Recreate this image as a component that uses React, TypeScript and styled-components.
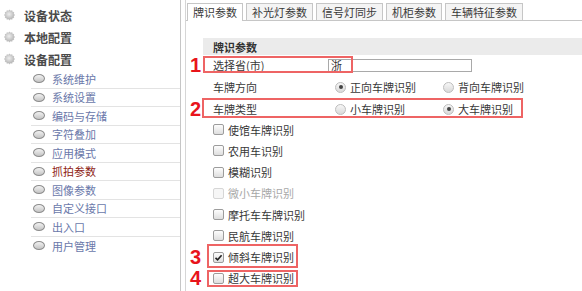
import React from 'react';
import styled, { createGlobalStyle } from 'styled-components';

const GlobalStyle = createGlobalStyle`
  html, body {
    margin: 0;
    padding: 0;
    background: #fff;
  }
  body {
    font-family: "Noto Sans CJK SC", "Liberation Sans", sans-serif;
  }
`

const topItems = ['设备状态', '本地配置', '设备配置'];
const subItems = ['系统维护', '系统设置', '编码与存储', '字符叠加', '应用模式', '抓拍参数', '图像参数', '自定义接口', '出入口', '用户管理'];
const tabs = ['牌识参数', '补光灯参数', '信号灯同步', '机柜参数', '车辆特征参数'];

type Check = { text: string; checked?: boolean; disabled?: boolean; mark?: string; box?: { top: number; height: number } };

const checks: Check[] = [
  { text: '使馆车牌识别' },
  { text: '农用车识别' },
  { text: '模糊识别' },
  { text: '微小车牌识别', disabled: true },
  { text: '摩托车车牌识别' },
  { text: '民航车牌识别' },
  { text: '倾斜车牌识别', checked: true, mark: '3', box: { top: -2.5, height: 24 } },
  { text: '超大车牌识别', mark: '4', box: { top: 2, height: 17 } },
];

function Gear() {
  return (
    <svg width="13" height="12" viewBox="0 0 13 12">
      <defs>
        <radialGradient id="gearFill" cx="0.45" cy="0.4" r="0.6">
          <stop offset="0" stopColor="#eeeeee" />
          <stop offset="1" stopColor="#b8b8b8" />
        </radialGradient>
      </defs>
      {[0, 30, 60, 90, 120, 150].map((a) => (
        <rect key={a} x="5.6" y="0.8" width="1.8" height="10.4" rx="0.7" fill="#c2c2c2" transform={`rotate(${a} 6.5 6)`} />
      ))}
      <ellipse cx="6.5" cy="6" rx="4.6" ry="4.2" fill="url(#gearFill)" />
    </svg>
  );
}

function App() {
  return (
    <Page>
      <GlobalStyle />
      <Sidebar>
        {topItems.map((t) => (
          <TopItem key={t}>
            <Gear />
            {t}
          </TopItem>
        ))}
        <SubList>
          {subItems.map((s) => (
            <SubItem key={s} $active={s === '抓拍参数'}>
              <Bullet />
              {s}
            </SubItem>
          ))}
        </SubList>
      </Sidebar>

      <Main>
        <TabBar>
          {tabs.map((t, i) => (
            <Tab key={t} $active={i === 0}>{t}</Tab>
          ))}
        </TabBar>

        <Body>
          <SectionHeader>牌识参数</SectionHeader>

          <Row $h={20}>
            <Marker>1</Marker>
            <Field>
              <Label>选择省(市)</Label>
              <TextInput value="浙" readOnly />
            </Field>
            <Annotation $left={17} $top={1} $w={150} $h={17} />
          </Row>

          <Row $h={24}>
            <Marker />
            <Field>
              <Label>车牌方向</Label>
              <Options>
                <Option><Radio $checked />正向车牌识别</Option>
                <Option><Radio />背向车牌识别</Option>
              </Options>
            </Field>
          </Row>

          <Row $h={20}>
            <Marker>2</Marker>
            <Field>
              <Label>车牌类型</Label>
              <Options>
                <Option><Radio />小车牌识别</Option>
                <Option><Radio $checked />大车牌识别</Option>
              </Options>
            </Field>
            <Annotation $left={16} $top={-1} $w={321} $h={20} />
          </Row>

          {checks.map((c) => (
            <Row key={c.text} $h={21.25}>
              <Marker>{c.mark}</Marker>
              <Field $disabled={c.disabled}>
                <CheckBox $disabled={c.disabled}>
                  {c.checked && (
                    <svg width="9" height="9" viewBox="0 0 9 9">
                      <polyline points="1.5,4.8 3.6,6.8 7.6,2.2" fill="none" stroke="#222" strokeWidth="1.6" />
                    </svg>
                  )}
                </CheckBox>
                {c.text}
              </Field>
              {c.box && <Annotation $left={21} $top={c.box.top} $w={91} $h={c.box.height} />}
            </Row>
          ))}
        </Body>
      </Main>
    </Page>
  );
}

const Page = styled.div`
  display: flex;
  width: 582px;
  height: 291px;
  overflow: hidden;
  background: #fff;
`

const Sidebar = styled.div`
  width: 181px;
  flex-shrink: 0;
  box-sizing: border-box;
  padding-top: 4px;
  border-right: 1px solid #c6c6c6;
`

const TopItem = styled.div`
  display: flex;
  align-items: center;
  gap: 8px;
  height: 22px;
  padding-left: 3px;
  font-size: 12px;
  font-weight: bold;
  color: #4a4a4a;
`

const SubList = styled.div`
  margin-left: 31px;
`

const SubItem = styled.div<{ $active?: boolean }>`
  display: flex;
  align-items: center;
  gap: 7px;
  height: 18.5px;
  box-sizing: border-box;
  padding-left: 2px;
  border-bottom: 1px solid #e3e3e3;
  font-size: 11px;
  color: ${(p) => (p.$active ? '#8e1c14' : '#6a78aa')};
  &:last-child {
    border-bottom: none;
  }
`

const Bullet = styled.span`
  width: 12px;
  height: 9px;
  box-sizing: border-box;
  border-radius: 50%;
  border: 1px solid #8c8c8c;
  background: linear-gradient(#f2f2f2, #c4c4c4);
`

const Main = styled.div`
  flex: 1;
  margin-left: 4px;
  border-left: 1px solid #d6d6d6;
`

const TabBar = styled.div`
  display: flex;
  align-items: flex-end;
  gap: 3px;
  height: 21px;
  box-sizing: border-box;
  padding-left: 1px;
  border-bottom: 1px solid #c6c6c6;
`

const Tab = styled.div<{ $active?: boolean }>`
  height: ${(p) => (p.$active ? 18 : 17)}px;
  margin-bottom: ${(p) => (p.$active ? -1 : 0)}px;
  box-sizing: border-box;
  padding: 0 5px;
  border: 1px solid #c6c6c6;
  border-bottom: none;
  background: ${(p) => (p.$active ? '#fff' : '#f4f4f4')};
  font-size: 11px;
  line-height: 16px;
  color: #3a3a3a;
  white-space: nowrap;
`

const Body = styled.div`
  padding-top: 17px;
`

const SectionHeader = styled.div`
  display: flex;
  align-items: center;
  height: 17px;
  margin-left: 17px;
  padding-left: 10px;
  background: #ebebeb;
  font-size: 11px;
  font-weight: bold;
  color: #333;
`

const Row = styled.div<{ $h: number }>`
  position: relative;
  display: flex;
  align-items: center;
  height: ${(p) => p.$h}px;
`

const Marker = styled.span`
  width: 17px;
  flex-shrink: 0;
  box-sizing: border-box;
  padding-left: 4px;
  font-family: "Liberation Sans", Arial, sans-serif;
  font-size: 20px;
  font-weight: bold;
  line-height: 20px;
  color: #e8141b;
`

const Field = styled.div<{ $disabled?: boolean }>`
  display: flex;
  align-items: center;
  padding-left: 10px;
  font-size: 11px;
  color: ${(p) => (p.$disabled ? '#a8a8a8' : '#383838')};
`

const Label = styled.span`
  width: 115px;
`

const TextInput = styled.input`
  width: 144px;
  height: 13px;
  box-sizing: border-box;
  margin: 0;
  padding: 0 0 0 2px;
  border: 1px solid #a9a9a9;
  font-family: "Noto Sans CJK SC", sans-serif;
  font-size: 11px;
  line-height: 11px;
  color: #333;
  outline: none;
`

const Options = styled.div`
  display: flex;
  margin-left: 7px;
`

const Option = styled.label`
  display: flex;
  align-items: center;
  gap: 4px;
  width: 108px;
`

const Radio = styled.span<{ $checked?: boolean }>`
  position: relative;
  width: 11px;
  height: 11px;
  box-sizing: border-box;
  border-radius: 50%;
  border: 1px solid #bdbdbd;
  background: linear-gradient(#f7f7f7, #d9d9d9);
  &::after {
    content: '';
    display: ${(p) => (p.$checked ? 'block' : 'none')};
    position: absolute;
    left: 2.5px;
    top: 2.5px;
    width: 4px;
    height: 4px;
    border-radius: 50%;
    background: #444;
  }
`

const CheckBox = styled.span<{ $disabled?: boolean }>`
  display: flex;
  align-items: center;
  justify-content: center;
  width: 11px;
  height: 11px;
  margin-right: 4px;
  box-sizing: border-box;
  border-radius: 2px;
  border: 1px solid ${(p) => (p.$disabled ? '#d6d6d6' : '#9c9c9c')};
  background: ${(p) => (p.$disabled ? '#f6f6f6' : 'linear-gradient(#fdfdfd, #dedede)')};
`

const Annotation = styled.div<{ $left: number; $top: number; $w: number; $h: number }>`
  position: absolute;
  left: ${(p) => p.$left}px;
  top: ${(p) => p.$top}px;
  width: ${(p) => p.$w}px;
  height: ${(p) => p.$h}px;
  box-sizing: border-box;
  border: 2px solid #ee6464;
  pointer-events: none;
`

export default App;
